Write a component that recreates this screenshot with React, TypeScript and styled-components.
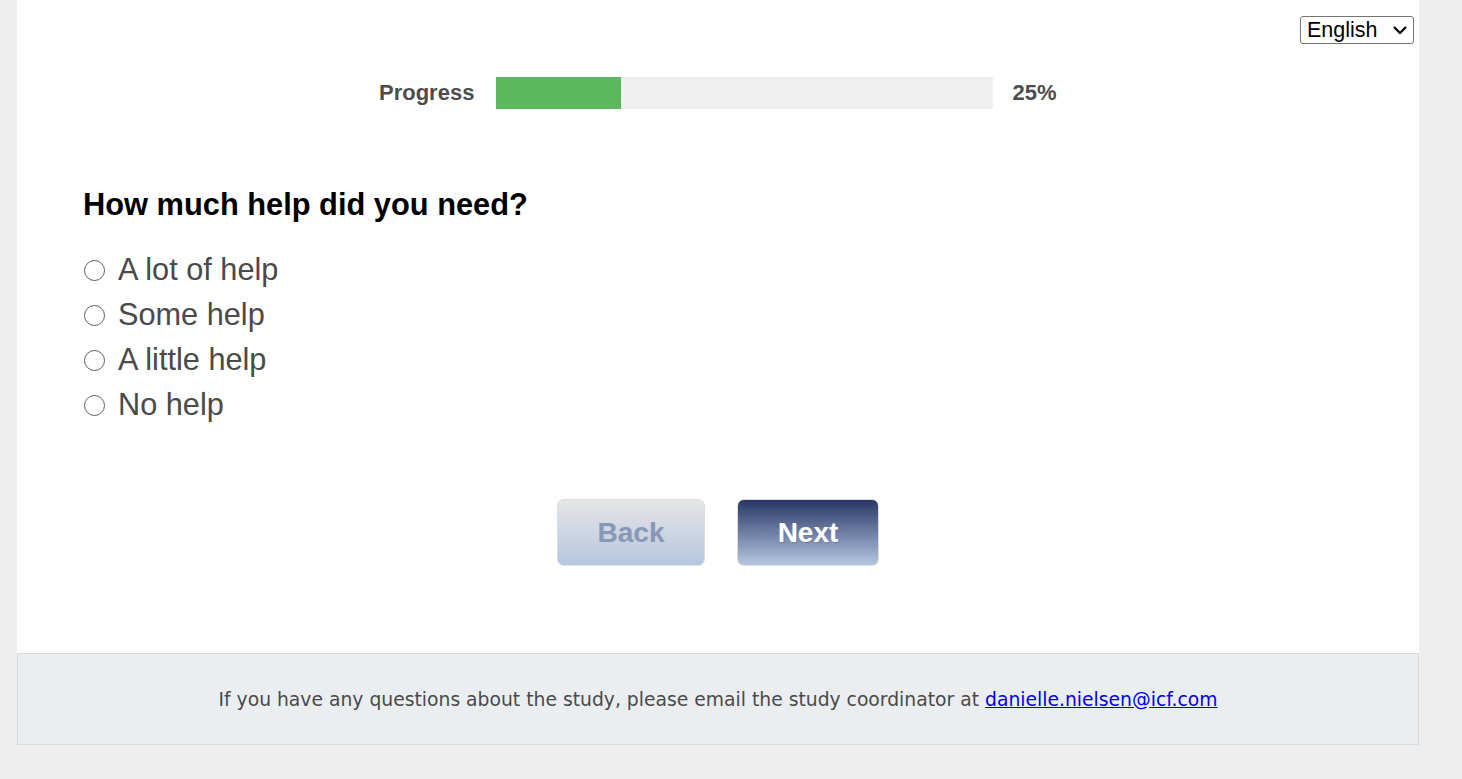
import React from "react";
import styled, { createGlobalStyle } from "styled-components";

const GlobalStyle = createGlobalStyle`
  html, body {
    margin: 0;
    padding: 0;
    background: #eeeeee;
    font-family: "Liberation Sans", Arial, sans-serif;
  }
`;

const options = ["A lot of help", "Some help", "A little help", "No help"];

const chevron =
  "url(\"data:image/svg+xml;utf8,<svg xmlns='http://www.w3.org/2000/svg' width='16' height='10' viewBox='0 0 16 10'><path d='M2 2l6 6 6-6' fill='none' stroke='black' stroke-width='2.2'/></svg>\")";

export default function App() {
  const [answer, setAnswer] = React.useState<string | null>(null);
  const progress = 25;

  return (
    <>
      <GlobalStyle />
      <Page>
        <Survey>
          <TopBar>
            <LanguageSelect defaultValue="en">
              <option value="en">English</option>
              <option value="es">Español</option>
            </LanguageSelect>
          </TopBar>
          <ProgressRow>
            <ProgressLabel>Progress</ProgressLabel>
            <ProgressTrack>
              <ProgressFill style={{ width: `${progress}%` }} />
            </ProgressTrack>
            <ProgressLabel>{progress}%</ProgressLabel>
          </ProgressRow>
          <Question>How much help did you need?</Question>
          <OptionList>
            {options.map((o) => (
              <OptionRow key={o}>
                <Radio
                  type="radio"
                  name="help"
                  checked={answer === o}
                  onChange={() => setAnswer(o)}
                />
                {o}
              </OptionRow>
            ))}
          </OptionList>
          <ButtonRow>
            <NavButton $variant="back" disabled>
              Back
            </NavButton>
            <NavButton $variant="next">Next</NavButton>
          </ButtonRow>
        </Survey>
        <Footer>
          If you have any questions about the study, please email the study
          coordinator at{" "}
          <a href="mailto:danielle.nielsen@icf.com">danielle.nielsen@icf.com</a>
        </Footer>
      </Page>
    </>
  );
}

const Page = styled.div`
  width: 1402px;
  margin-left: 17px;
  padding-bottom: 34px;
`;

const Survey = styled.div`
  background: #ffffff;
  padding: 16px 5px 87px 66px;
  height: 653px;
  box-sizing: border-box;
`;

const TopBar = styled.div`
  display: flex;
  justify-content: flex-end;
  height: 28px;
`;

const LanguageSelect = styled.select`
  appearance: none;
  font-family: "Liberation Sans", Arial, sans-serif;
  font-size: 21.5px;
  height: 28px;
  width: 114px;
  border: 1px solid #767676;
  border-radius: 3px;
  background: #fff ${chevron} no-repeat right 5px center / 16px 10px;
  color: #000;
  padding: 0 0 0 6px;
`;

const ProgressRow = styled.div`
  display: flex;
  align-items: center;
  margin: 33px 0 0 296px;
`;

const ProgressLabel = styled.span`
  font-size: 22px;
  font-weight: bold;
  color: #4d4d4d;
  &:first-child {
    margin-right: 22px;
  }
  &:last-child {
    margin-left: 19px;
  }
`;

const ProgressTrack = styled.div`
  width: 497px;
  height: 32px;
  background: #f0f0f0;
`;

const ProgressFill = styled.div`
  height: 100%;
  background: #5cb85c;
`;

const Question = styled.h2`
  margin: 78px 0 0 0;
  font-size: 30.8px;
  font-weight: bold;
  color: #000;
`;

const OptionList = styled.div`
  margin-top: 24px;
  display: flex;
  flex-direction: column;
`;

const OptionRow = styled.label`
  display: flex;
  align-items: center;
  height: 45px;
  font-size: 30.7px;
  color: #4a4a4a;
  gap: 13px;
  cursor: pointer;
`;

const Radio = styled.input`
  appearance: none;
  box-sizing: border-box;
  width: 21px;
  height: 21px;
  margin: 2px 0 0 1px;
  border: 1.7px solid #5e5e5e;
  border-radius: 50%;
  background: #fff;
  cursor: pointer;

  &:checked {
    background: radial-gradient(circle, #333 0 4.5px, #fff 5px);
  }
`;

const ButtonRow = styled.div`
  display: flex;
  justify-content: center;
  gap: 32px;
  margin-top: 72px;
  padding-right: 61px;
`;

const NavButton = styled.button<{ $variant: "back" | "next" }>`
  height: 67px;
  width: ${(p) => (p.$variant === "back" ? "148px" : "142px")};
  border-radius: 7px;
  border: 1px solid #d8dde6;
  font-family: "Liberation Sans", Arial, sans-serif;
  font-size: 28px;
  font-weight: bold;
  background: ${(p) =>
    p.$variant === "back"
      ? "linear-gradient(to bottom, #e6e6e6 0%, #b5c6e0 100%)"
      : "linear-gradient(to bottom, #283666 0%, #b5c6e0 100%)"};
  color: ${(p) => (p.$variant === "back" ? "#8798b8" : "#ffffff")};
  text-shadow: ${(p) =>
    p.$variant === "back" ? "1px 1px 1px #c7cfdc" : "1px 1px 1px #6f7fa6"};
  cursor: pointer;
`;

const Footer = styled.div`
  height: 92px;
  box-sizing: border-box;
  background: #ebeef1;
  border: 1px solid #d7dbe0;
  display: flex;
  align-items: center;
  justify-content: center;
  font-family: "DejaVu Sans", Tahoma, sans-serif;
  font-size: 18.75px;
  color: #4a4a4a;
  white-space: pre;

  a {
    color: #0000ee;
  }
`;
